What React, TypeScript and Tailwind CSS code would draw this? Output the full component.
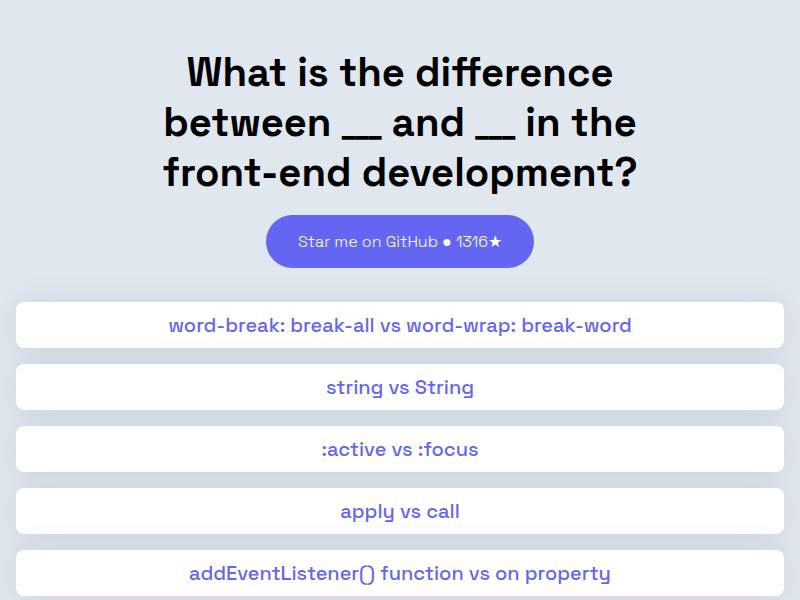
const questions = [
  "word-break: break-all vs word-wrap: break-word",
  "string vs String",
  ":active vs :focus",
  "apply vs call",
  "addEventListener() function vs on property",
];

function Blank() {
  return <span className="font-['Inter',sans-serif] text-[27px] leading-none font-black">___</span>;
}

export default function App() {
  return (
    <main className="min-h-screen bg-[#e1e7ef] px-4 pt-12 text-center font-['Space_Grotesk','Liberation_Sans','DejaVu_Sans',sans-serif]">
      <h1 className="text-[40px] leading-[50px] font-semibold text-black">
        What is the difference
        <br />
        between <Blank /> and <Blank /> in the
        <br />
        front-end development?
      </h1>
      <a
        href="#star"
        className="mt-[17px] inline-flex h-[53px] items-center rounded-full bg-[#6466f1] px-8 text-base font-light text-white"
      >
        Star me on GitHub ● 1316★
      </a>
      <ul className="mt-[34px] flex flex-col gap-4">
        {questions.map((question) => (
          <li key={question}>
            <a
              href="#question"
              className="flex min-h-[46px] items-center justify-center rounded-lg bg-white text-xl font-medium text-[#6466f1] shadow-[0_2px_30px_rgba(80,110,130,0.15)]"
            >
              {question}
            </a>
          </li>
        ))}
      </ul>
    </main>
  );
}
